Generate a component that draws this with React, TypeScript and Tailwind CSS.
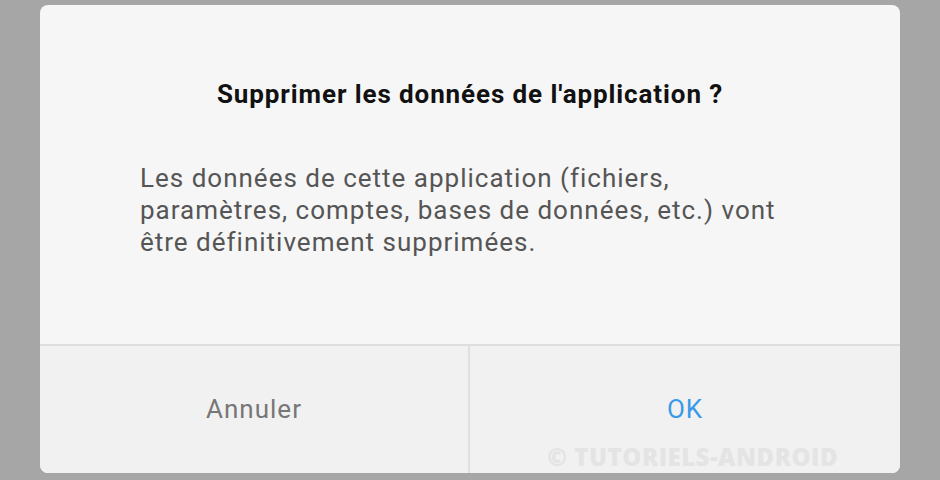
export default function App() {
  return (
    <div className="w-[940px] h-[480px] bg-[#a6a6a6] pt-[5px] px-[40px] font-['Roboto',sans-serif]">
      <div className="relative h-[468px] bg-[#f6f6f6] rounded-[8px] overflow-hidden flex flex-col">
        {/* Title + message */}
        <div className="h-[339px] pt-[73px]">
          <h2 className="text-center text-[26px] leading-[32px] tracking-[0.9px] font-bold text-[#111]">
            Supprimer les données de l'application ?
          </h2>
          <p className="mt-[52px] ml-[100px] w-[660px] text-[26px] leading-[32px] tracking-[1px] text-[#555]">
            Les données de cette application (fichiers,
            <br />
            paramètres, comptes, bases de données, etc.) vont
            <br />
            être définitivement supprimées.
          </p>
        </div>

        {/* Actions */}
        <div className="flex-1 grid grid-cols-2 border-t-2 border-[#dedede] bg-[#f1f1f1]">
          <button className="text-[26px] tracking-[1px] text-[#777] border-r-2 border-[#e0e0e0]">Annuler</button>
          <button className="text-[26px] tracking-[1px] text-[#3b9ae8]">OK</button>
        </div>

        <div className="absolute right-[62px] bottom-[-2px] text-[24px] font-extrabold tracking-[0.5px] text-[#e4e4e4] font-['Open_Sans',sans-serif]">
          © TUTORIELS-ANDROID
        </div>
      </div>
    </div>
  );
}
